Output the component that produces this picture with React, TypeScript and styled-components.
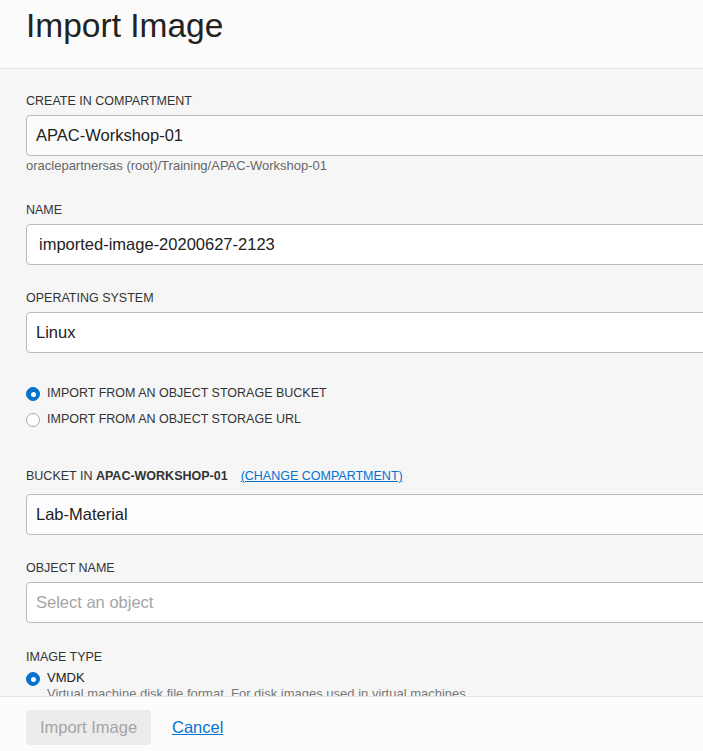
import React from "react";
import styled, { createGlobalStyle } from "styled-components";

const Global = createGlobalStyle`
  html, body { margin: 0; padding: 0; }
  body {
    font-family: "Liberation Sans", Arial, Helvetica, sans-serif;
    color: #333;
    background: #f6f6f6;
  }
  * { box-sizing: border-box; }
`;

const Page = styled.div`
  width: 703px;
  height: 751px;
  overflow: hidden;
  display: flex;
  flex-direction: column;
  background: #f6f6f6;
`;

const Header = styled.header`
  flex: 0 0 69px;
  background: #fbfbfb;
  border-bottom: 1px solid #e2e2e2;
  padding: 6px 0 0 26px;
`;

const Title = styled.h1`
  margin: 0;
  font-size: 33.5px;
  line-height: 40px;
  font-weight: 400;
  color: #222;
`;

const Body = styled.main`
  flex: 1 1 auto;
  overflow: hidden;
  padding: 24px 0 0 26px;
`;

const Field = styled.div<{ $gap?: number }>`
  width: 720px;
  margin-bottom: ${(p) => p.$gap ?? 25}px;
`;

const Label = styled.div<{ $mb?: number }>`
  font-size: 12.5px;
  line-height: 16px;
  text-transform: uppercase;
  color: #333;
  margin-bottom: ${(p) => p.$mb ?? 6}px;
  strong {
    font-weight: 700;
  }
`;

const Link = styled.a`
  color: #0572ce;
  text-decoration: underline;
  margin-left: 13px;
  cursor: pointer;
`;

const Input = styled.div<{ $bg?: string; $pad?: number; $placeholder?: boolean }>`
  height: 41px;
  border: 1px solid #b8bbc2;
  border-radius: 4px;
  background: ${(p) => p.$bg ?? "#fff"};
  display: flex;
  align-items: center;
  padding-left: ${(p) => p.$pad ?? 9}px;
  font-size: 16.5px;
  color: ${(p) => (p.$placeholder ? "#a5a5a5" : "#222")};
`;

const Help = styled.div`
  font-size: 13px;
  line-height: 16px;
  color: #666;
  margin-top: 2px;
`;

const RadioGroup = styled.div<{ $gap?: number }>`
  display: flex;
  flex-direction: column;
  margin-bottom: ${(p) => p.$gap ?? 0}px;
`;

const RadioRow = styled.label`
  display: flex;
  align-items: center;
  height: 26px;
  font-size: 12.5px;
  text-transform: uppercase;
  color: #333;
  gap: 7px;
`;

const RadioCircle = styled.span<{ $checked?: boolean }>`
  width: 14px;
  height: 14px;
  border-radius: 50%;
  flex: 0 0 14px;
  position: relative;
  background: ${(p) => (p.$checked ? "#0572ce" : "#fff")};
  border: 1px solid ${(p) => (p.$checked ? "#0572ce" : "#a9a9a9")};
  margin-top: 2px;
  &::after {
    content: "";
    display: ${(p) => (p.$checked ? "block" : "none")};
    position: absolute;
    left: 50%;
    top: 50%;
    width: 5px;
    height: 5px;
    margin: -2.5px 0 0 -2.5px;
    border-radius: 50%;
    background: #fff;
  }
`;

const TypeOption = styled.div`
  display: flex;
  gap: 7px;
  margin-top: 5px;
`;

const TypeText = styled.div`
  display: flex;
  flex-direction: column;
  font-size: 13px;
  line-height: 16px;
`;

const TypeName = styled.span`
  color: #222;
`;

const TypeDesc = styled.span`
  color: #777;
  white-space: nowrap;
`;

const Footer = styled.footer`
  flex: 0 0 55px;
  background: #fcfcfc;
  border-top: 1px solid #e2e2e2;
  padding: 13px 26px 0;
  display: flex;
  align-items: flex-start;
  gap: 21px;
`;

const Button = styled.button`
  height: 35px;
  width: 125px;
  border: none;
  border-radius: 3px;
  background: #ececec;
  color: #a5a5a5;
  font-family: inherit;
  font-size: 16.5px;
  padding: 0;
`;

const CancelLink = styled.a`
  color: #0572ce;
  font-size: 16.5px;
  line-height: 35px;
  text-decoration: underline;
  cursor: pointer;
`;

export default function App() {
  return (
    <>
      <Global />
      <Page>
        <Header>
          <Title>Import Image</Title>
        </Header>
        <Body>
          <Field $gap={28}>
            <Label>Create in compartment</Label>
            <Input $bg="#fcfcfc">APAC-Workshop-01</Input>
            <Help>oraclepartnersas (root)/Training/APAC-Workshop-01</Help>
          </Field>
          <Field>
            <Label>Name</Label>
            <Input $pad={12}>imported-image-20200627-2123</Input>
          </Field>
          <Field $gap={27}>
            <Label>Operating system</Label>
            <Input>Linux</Input>
          </Field>
          <RadioGroup $gap={36}>
            <RadioRow>
              <RadioCircle $checked />
              Import from an object storage bucket
            </RadioRow>
            <RadioRow>
              <RadioCircle />
              Import from an object storage URL
            </RadioRow>
          </RadioGroup>
          <Field>
            <Label $mb={10}>
              Bucket in <strong>APAC-Workshop-01</strong>
              <Link>(Change compartment)</Link>
            </Label>
            <Input $bg="#fdfdfd">Lab-Material</Input>
          </Field>
          <Field $gap={26}>
            <Label>Object name</Label>
            <Input $placeholder>Select an object</Input>
          </Field>
          <Field>
            <Label $mb={0}>Image type</Label>
            <TypeOption>
              <RadioCircle $checked />
              <TypeText>
                <TypeName>VMDK</TypeName>
                <TypeDesc>Virtual machine disk file format. For disk images used in virtual machines.</TypeDesc>
              </TypeText>
            </TypeOption>
          </Field>
        </Body>
        <Footer>
          <Button disabled>Import Image</Button>
          <CancelLink>Cancel</CancelLink>
        </Footer>
      </Page>
    </>
  );
}
